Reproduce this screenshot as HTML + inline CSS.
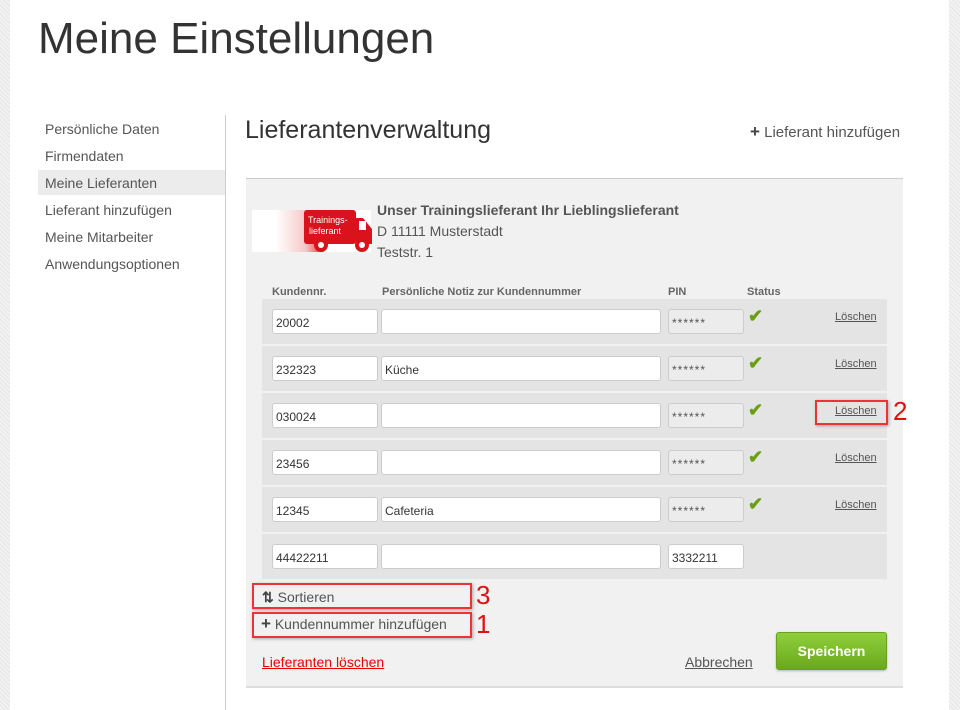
<!DOCTYPE html>
<html><head><meta charset="utf-8"><style>
*{box-sizing:border-box;margin:0;padding:0}
body{width:960px;height:710px;position:relative;overflow:hidden;background:#fff;font-family:"Liberation Sans",sans-serif;color:#555}
.tex{position:absolute;top:0;height:710px;background:repeating-linear-gradient(45deg,#e6e6e6 0 1px,#f2f2f2 1px 3px)}
.a{position:absolute;white-space:nowrap}
.side{font-size:14px;color:#555;left:45px}
.row{position:absolute;left:262px;width:625px;height:45px;background:#e4e4e4}
.in{position:absolute;top:10px;height:25px;background:#fff;border:1px solid #ccc;border-radius:3px;font-size:12px;color:#333;padding:6px 0 0 3px}
.pin{background:#ececec;color:#555;letter-spacing:1px}
.hd{font-size:11px;font-weight:bold;color:#666;top:286px}
.lo{position:absolute;left:573px;top:12px;font-size:11px;color:#555;text-decoration:underline}
.ck{position:absolute;left:486px;top:7px;color:#6a9f10;font-size:18px;font-weight:bold}
.rb{position:absolute;border:2px solid #e33;box-shadow:1px 1px 3px rgba(0,0,0,.3)}
.num{position:absolute;color:#d11;font-size:26px}
</style></head><body>
<div class="tex" style="left:0;width:10px"></div>
<div class="tex" style="left:949px;width:11px"></div>
<div class="a" style="left:38px;top:14px;font-size:44px;color:#333;font-weight:300">Meine Einstellungen</div>
<div class="a" style="left:38px;top:170px;width:187px;height:25px;background:#ececec"></div>
<div class="a side" style="top:121px">Persönliche Daten</div>
<div class="a side" style="top:148px">Firmendaten</div>
<div class="a side" style="top:175px">Meine Lieferanten</div>
<div class="a side" style="top:202px">Lieferant hinzufügen</div>
<div class="a side" style="top:229px">Meine Mitarbeiter</div>
<div class="a side" style="top:256px">Anwendungsoptionen</div>
<div class="a" style="left:225px;top:115px;width:1px;height:595px;background:#ccc"></div>
<div class="a" style="left:245px;top:116px;font-size:25px;color:#333">Lieferantenverwaltung</div>
<div class="a" style="left:750px;top:122px;font-size:15px;color:#555"><b style="font-size:17px;color:#444">+</b> Lieferant hinzufügen</div>
<div class="a" style="left:246px;top:178px;width:657px;height:510px;background:#f1f1f1;border-top:1px solid #ccc;border-bottom:2px solid #ddd"></div>
<div class="a" style="left:252px;top:210px;width:119px;height:42px;background:linear-gradient(90deg,#fff 0%,#fff 20%,#f6c8c8 45%,#e33 60%,#fff 60%)"></div>
<svg class="a" style="left:303px;top:208px" width="70" height="46" viewBox="0 0 70 46"><rect x="1" y="2" width="52" height="34" rx="3" fill="#d9121b"/><path d="M53 10h7l9 11v15H53z" fill="#d9121b"/><rect x="56" y="13" width="7" height="9" fill="#fff"/><circle cx="18" cy="37" r="7" fill="#d9121b"/><circle cx="18" cy="37" r="3" fill="#fff"/><circle cx="59" cy="37" r="7" fill="#d9121b"/><circle cx="59" cy="37" r="3" fill="#fff"/><text x="5" y="15" font-size="9" fill="#fff" font-family="Liberation Sans">Trainings-</text><text x="6" y="26" font-size="9" fill="#fff" font-family="Liberation Sans">lieferant</text></svg>
<div class="a" style="left:377px;top:202px;font-size:14px;font-weight:bold;color:#555">Unser Trainingslieferant Ihr Lieblingslieferant</div>
<div class="a" style="left:377px;top:223px;font-size:14px;color:#555">D 11111 Musterstadt</div>
<div class="a" style="left:377px;top:244px;font-size:14px;color:#555">Teststr. 1</div>
<div class="a hd" style="left:272px">Kundennr.</div>
<div class="a hd" style="left:382px">Persönliche Notiz zur Kundennummer</div>
<div class="a hd" style="left:668px">PIN</div>
<div class="a hd" style="left:747px">Status</div>

<div class="row" style="top:299px"><div class="in" style="left:10px;width:106px">20002</div><div class="in" style="left:119px;width:280px"></div><div class="in pin" style="left:406px;width:76px">******</div><div class="ck">✔</div><div class="lo">Löschen</div></div>
<div class="row" style="top:346px"><div class="in" style="left:10px;width:106px">232323</div><div class="in" style="left:119px;width:280px">Küche</div><div class="in pin" style="left:406px;width:76px">******</div><div class="ck">✔</div><div class="lo">Löschen</div></div>
<div class="row" style="top:393px"><div class="in" style="left:10px;width:106px">030024</div><div class="in" style="left:119px;width:280px"></div><div class="in pin" style="left:406px;width:76px">******</div><div class="ck">✔</div><div class="lo">Löschen</div></div>
<div class="row" style="top:440px"><div class="in" style="left:10px;width:106px">23456</div><div class="in" style="left:119px;width:280px"></div><div class="in pin" style="left:406px;width:76px">******</div><div class="ck">✔</div><div class="lo">Löschen</div></div>
<div class="row" style="top:487px"><div class="in" style="left:10px;width:106px">12345</div><div class="in" style="left:119px;width:280px">Cafeteria</div><div class="in pin" style="left:406px;width:76px">******</div><div class="ck">✔</div><div class="lo">Löschen</div></div>
<div class="row" style="top:534px"><div class="in" style="left:10px;width:106px">44422211</div><div class="in" style="left:119px;width:280px"></div><div class="in" style="left:406px;width:76px">3332211</div></div>

<div class="rb" style="left:815px;top:400px;width:73px;height:25px"></div>
<div class="num" style="left:893px;top:396px">2</div>
<div class="rb" style="left:252px;top:583px;width:220px;height:26px"></div>
<div class="num" style="left:476px;top:580px">3</div>
<div class="rb" style="left:252px;top:612px;width:220px;height:26px"></div>
<div class="num" style="left:476px;top:609px">1</div>
<div class="a" style="left:262px;top:589px;font-size:14px;color:#555"><b style="color:#444">⇅</b> Sortieren</div>
<div class="a" style="left:261px;top:614px;font-size:14px;color:#555"><b style="font-size:17px;color:#444">+</b> Kundennummer hinzufügen</div>
<div class="a" style="left:262px;top:654px;font-size:14px;color:#e00;text-decoration:underline">Lieferanten löschen</div>
<div class="a" style="left:685px;top:654px;font-size:14px;color:#555;text-decoration:underline">Abbrechen</div>
<div class="a" style="left:776px;top:632px;width:111px;height:38px;border-radius:3px;background:linear-gradient(#8fcf3a,#6aa81c);border:1px solid #6aa020;color:#fff;font-weight:bold;font-size:14px;text-align:center;line-height:36px;box-shadow:0 1px 2px rgba(0,0,0,.25)">Speichern</div>
</body></html>
